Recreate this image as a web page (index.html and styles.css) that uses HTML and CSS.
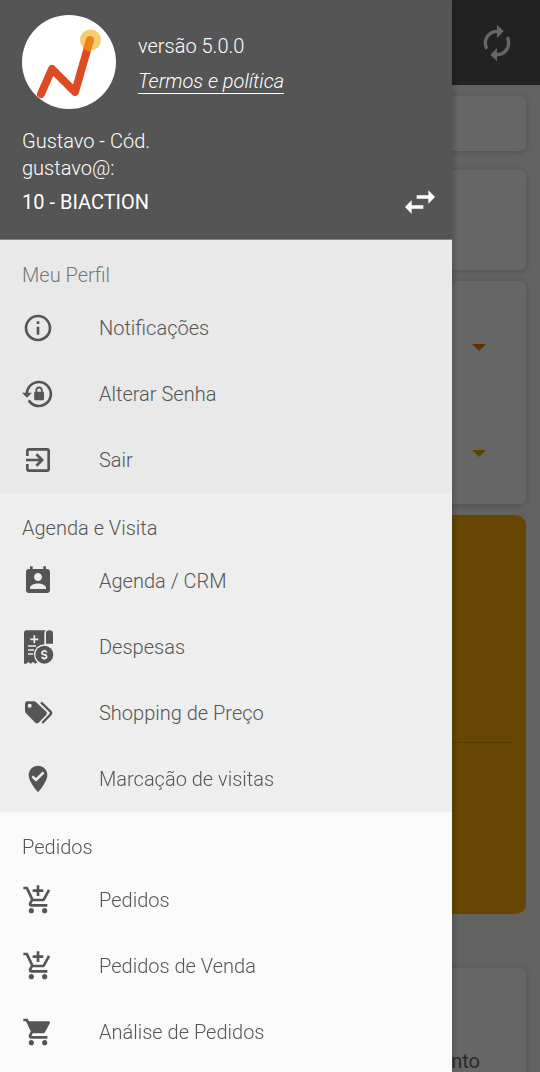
FILE: index.html
```html
<!DOCTYPE html>
<html lang="pt-BR">
<head>
<meta charset="utf-8">
<meta name="viewport" content="width=device-width, initial-scale=1">
<title>BIACTION</title>
<link rel="stylesheet" href="styles.css">
</head>
<body>
<div class="app">
  <header class="app-bar">
    <button class="icon-button" type="button" aria-label="Atualizar">
      <svg class="icon-large" viewBox="0 0 24 24"><path d="M12 6v3l4-4-4-4v3c-4.420 0-8 3.580-8 8 0 1.570.46 3.030 1.240 4.260L6.700 14.800c-.45-.83-.7-1.790-.7-2.800 0-3.310 2.690-6 6-6zm6.760 1.740L17.300 9.200c.44.84.7 1.790.7 2.800 0 3.310-2.690 6-6 6v-3l-4 4 4 4v-3c4.420 0 8-3.580 8-8 0-1.570-.46-3.030-1.240-4.260z"/></svg>
    </button>
  </header>
  <main class="board">
    <section class="card card-search"></section>
    <section class="card card-summary"></section>
    <section class="card card-filters">
      <svg class="caret caret-orange" viewBox="0 0 14 8"><path d="M0 0h14L7 7z"/></svg>
      <svg class="caret caret-yellow" viewBox="0 0 14 8"><path d="M0 0h14L7 7z"/></svg>
    </section>
    <section class="card card-gold"><hr class="gold-rule"></section>
    <section class="card card-payment">nto</section>
  </main>
</div>
<div class="scrim"></div>

<aside class="drawer">
  <header class="profile">
    <div class="brand">
      <svg class="logo" viewBox="0 0 94 94">
        <circle cx="47" cy="47" r="47" fill="#fff"/>
        <path d="M19 79L30 54 53 77 68 25" fill="none" stroke="#dd4b24" stroke-width="8" stroke-linecap="round" stroke-linejoin="round"/>
        <circle cx="68.500" cy="25" r="10.500" fill="#f4ce70"/>
        <path d="M68 25L64.800 35.500" fill="none" stroke="#ee8214" stroke-width="8"/>
        <circle cx="68" cy="25" r="4" fill="#ee8214"/>
      </svg>
      <div class="brand-text">
        <span>versão 5.0.0</span>
        <a class="terms" href="#termos">Termos e política</a>
      </div>
    </div>
    <div class="account">
      <span>Gustavo - Cód.</span>
      <span>gustavo@:</span>
      <div class="company-row">
        <strong class="company">10 - BIACTION</strong>
        <button class="icon-button" type="button" aria-label="Trocar empresa">
          <svg class="icon-large" viewBox="0 0 24 24"><path d="M6.990 11L3 15l3.990 4v-3H14v-2H6.990v-3zM21 9l-3.990-4v3H10v2h7.010v3L21 9z"/></svg>
        </button>
      </div>
    </div>
  </header>

  <nav>
    <section class="group group-profile">
      <h2 class="group-title">Meu Perfil</h2>
      <a class="item" href="#notificacoes">
        <svg class="icon" viewBox="0 0 24 24"><path d="M11 7h2v2h-2zm0 4h2v6h-2zm1-9C6.480 2 2 6.480 2 12s4.480 10 10 10 10-4.480 10-10S17.520 2 12 2zm0 18c-4.410 0-8-3.590-8-8s3.590-8 8-8 8 3.590 8 8-3.590 8-8 8z"/></svg>
        Notificações
      </a>
      <a class="item" href="#senha">
        <svg class="icon" viewBox="0 0 24 24"><path d="M12.630 2C18.160 2 22.640 6.500 22.640 12S18.160 22 12.630 22C9.120 22 6.050 20.180 4.260 17.430L5.840 16.180C7.250 18.470 9.760 20 12.640 20A8 8 0 0 0 20.640 12A8 8 0 0 0 12.640 4C8.560 4 5.200 7.060 4.710 11H7.470L3.730 14.730L0 11H2.690C3.190 5.950 7.450 2 12.630 2M15.590 10.240C16.090 10.250 16.500 10.650 16.500 11.160V15.770C16.500 16.270 16.090 16.690 15.580 16.690H10.050C9.540 16.690 9.130 16.270 9.130 15.770V11.160C9.130 10.650 9.540 10.250 10.040 10.240V9.230C10.040 7.700 11.290 6.460 12.810 6.460C14.340 6.460 15.590 7.700 15.590 9.230V10.240M12.810 7.860C12.060 7.860 11.440 8.470 11.440 9.230V10.240H14.190V9.230C14.190 8.470 13.570 7.860 12.810 7.860Z"/></svg>
        Alterar Senha
      </a>
      <a class="item" href="#sair">
        <svg class="icon" viewBox="0 0 24 24"><path d="M10.090 15.590L11.500 17l5-5-5-5-1.410 1.410L12.670 11H3v2h9.670l-2.580 2.590zM19 3H5c-1.110 0-2 .9-2 2v4h2V5h14v14H5v-4H3v4c0 1.100.89 2 2 2h14c1.100 0 2-.9 2-2V5c0-1.100-.9-2-2-2z"/></svg>
        Sair
      </a>
    </section>

    <section class="group group-agenda">
      <h2 class="group-title">Agenda e Visita</h2>
      <a class="item" href="#agenda">
        <svg class="icon" viewBox="0 0 24 24"><path d="M19 3h-1V1h-2v2H8V1H6v2H5c-1.110 0-2 .9-2 2v14c0 1.100.89 2 2 2h14c1.100 0 2-.9 2-2V5c0-1.100-.9-2-2-2zm-7 3c1.660 0 3 1.340 3 3s-1.340 3-3 3-3-1.340-3-3 1.340-3 3-3zm6 12H6v-1c0-2 4-3.100 6-3.100s6 1.100 6 3.100v1z"/></svg>
        Agenda / CRM
      </a>
      <a class="item" href="#despesas">
        <svg class="icon" viewBox="66 242 96 96">
          <path d="M80 240H137Q133 244 133 251V340L127 335 120 340 113 335 106 340 99 335 92 340 85 335 79 340H72V248Q72 240 80 240Z"/>
          <path d="M138 280V250Q138 240 148 240 159 240 159 250V280Z"/>
          <path class="cut-line" d="M103 255V279M91 267H115M84 287H108M84 299H102M84 311H100"/>
          <circle class="cut" cx="133" cy="313" r="31"/>
          <circle cx="133" cy="313" r="27"/>
          <path class="cut-line" d="M140 307Q139 302 133 302 126 302 126 307 126 312 133 313 140 314 140 319 140 324 133 324 126 324 126 319M133 298V302M133 324V328"/>
        </svg>
        Despesas
      </a>
      <a class="item" href="#shopping">
        <svg class="icon" viewBox="66 442 96 96">
          <path d="M75 462Q75 455 82 455H101Q106 455 110 459L139 486Q143 490 139 495L116 519Q111 523 106 519L78 491Q75 488 75 483Z"/>
          <circle class="cut" cx="89" cy="468" r="6"/>
          <path class="stroke" d="M123 458L151 485Q156 490 151 495L127 520"/>
        </svg>
        Shopping de Preço
      </a>
      <a class="item" href="#visitas">
        <svg class="icon" viewBox="0 0 24 24"><path d="M12 2C8.130 2 5 5.130 5 9c0 5.250 7 13 7 13s7-7.750 7-13c0-3.870-3.130-7-7-7z"/><path class="check" d="M7.800 10L10.500 12.700 16.200 7"/></svg>
        Marcação de visitas
      </a>
    </section>

    <section class="group">
      <h2 class="group-title">Pedidos</h2>
      <a class="item" href="#pedidos">
        <svg class="icon" viewBox="0 0 24 24"><path id="cart-plus" d="M11 9h2V6h3V4h-3V1h-2v3H8v2h3v3zm-4 9c-1.100 0-1.990.9-1.990 2S5.900 22 7 22s2-.9 2-2-.9-2-2-2zm10 0c-1.100 0-1.990.9-1.990 2s.89 2 1.990 2 2-.9 2-2-.9-2-2-2zm-9.830-3.250l.03-.12.9-1.630h7.450c.75 0 1.410-.41 1.750-1.030l3.860-7.010L19.420 4h-.01l-1.100 2-2.760 5H8.530l-.13-.27L6.160 6l-.95-2-.94-2H1v2h2l3.600 7.590-1.350 2.450c-.16.28-.25.61-.25.96 0 1.100.9 2 2 2h12v-2H7.420c-.13 0-.25-.11-.25-.25z"/></svg>
        Pedidos
      </a>
      <a class="item" href="#pedidos-venda">
        <svg class="icon" viewBox="0 0 24 24"><use href="#cart-plus"/></svg>
        Pedidos de Venda
      </a>
      <a class="item" href="#analise">
        <svg class="icon" viewBox="0 0 24 24"><path d="M7 18c-1.100 0-1.990.9-1.990 2S5.900 22 7 22s2-.9 2-2-.9-2-2-2zM1 2v2h2l3.600 7.590-1.350 2.450c-.16.28-.25.61-.25.96 0 1.100.9 2 2 2h12v-2H7.420c-.14 0-.25-.11-.25-.25l.03-.12.9-1.630h7.450c.75 0 1.410-.41 1.750-1.030l3.580-6.490c.08-.14.12-.31.12-.48 0-.55-.45-1-1-1H5.210l-.94-2H1zm16 16c-1.100 0-1.990.9-1.990 2s.89 2 1.990 2 2-.9 2-2-.9-2-2-2z"/></svg>
        Análise de Pedidos
      </a>
    </section>
  </nav>
</aside>
</body>
</html>
```
FILE: styles.css
```css
* {
  box-sizing: border-box;
}

body {
  margin: 0;
  font-family: Roboto, "Noto Sans", sans-serif;
  font-size: 20px;
  font-weight: 300;
  line-height: 26px;
  color: #555;
}

svg {
  display: block;
  flex: none;
  fill: currentColor;
}

.icon-button {
  padding: 0;
  border: 0;
  background: none;
  color: #fff;
}

.icon-large {
  width: 40px;
  height: 40px;
}

/* Dashboard behind the drawer */

.app {
  height: 100vh;
  overflow: hidden;
  background: #f5f5f5;
}

.app-bar {
  display: flex;
  align-items: center;
  justify-content: flex-end;
  height: 85px;
  padding: 0 23px;
  background: #555;
}

.board {
  display: flex;
  flex-direction: column;
  gap: 11px;
  padding: 11px 14px;
}

.card {
  flex: none;
  border-radius: 6px;
  background: #fff;
  box-shadow: 0 1px 6px rgba(0, 0, 0, 0.2);
}

.card-search {
  height: 55px;
  margin-bottom: 8px;
}

.card-summary {
  height: 100px;
}

.card-filters {
  display: flex;
  flex-direction: column;
  align-items: flex-end;
  gap: 98px;
  height: 223px;
  padding: 63px 40px;
}

.caret {
  width: 14px;
  height: 8px;
}

.caret-orange {
  color: #f57c00;
}

.caret-yellow {
  color: #e0aa00;
}

.card-gold {
  display: flex;
  flex-direction: column;
  justify-content: center;
  height: 399px;
  padding: 56px 14px 0;
  border-radius: 10px;
  background: #ffb000;
  box-shadow: none;
}

.gold-rule {
  width: 100%;
  height: 1px;
  margin: 0;
  border: 0;
  background: #d79400;
}

.card-payment {
  height: 240px;
  margin-top: 43px;
  padding: 80px 46px;
  text-align: right;
  font-weight: 400;
  color: #666;
}

.scrim {
  position: fixed;
  inset: 0;
  background: rgba(0, 0, 0, 0.6);
}

/* Navigation drawer */

.drawer {
  position: fixed;
  inset: 0 88px 0 0;
  overflow-y: auto;
  background: #fafafa;
  box-shadow: 0 0 8px rgba(0, 0, 0, 0.3);
}

.profile {
  display: flex;
  flex-direction: column;
  gap: 19px;
  padding: 15px 12px 17px 22px;
  border-bottom: 1px solid #8c8686;
  background: #555;
  color: #fff;
}

.brand {
  display: flex;
  align-items: center;
  gap: 22px;
}

.logo {
  width: 94px;
  height: 94px;
}

.brand-text {
  display: flex;
  flex-direction: column;
  gap: 10px;
  padding-top: 3px;
}

.terms {
  border-bottom: 1px solid #fff;
  color: inherit;
  font-style: italic;
  line-height: 24px;
  text-decoration: none;
}

.account {
  display: flex;
  flex-direction: column;
  gap: 1px;
}

.company-row {
  display: flex;
  align-items: center;
  justify-content: space-between;
}

.company {
  font-weight: 400;
}

.group-profile {
  background: #e9e9e9;
}

.group-agenda {
  background: #eee;
}

.group-title {
  margin: 0;
  padding: 22px 22px 7px;
  font-size: 20px;
  font-weight: 300;
}

.group-profile .group-title {
  color: #777;
}

.item {
  display: flex;
  align-items: center;
  gap: 45px;
  height: 66px;
  padding: 0 22px;
  color: inherit;
  text-decoration: none;
}

.icon {
  width: 32px;
  height: 32px;
  overflow: visible;
}

.cut {
  fill: #eee;
}

.cut-line {
  fill: none;
  stroke: #eee;
  stroke-width: 5;
}

.stroke {
  fill: none;
  stroke: currentColor;
  stroke-width: 7;
}

.check {
  fill: none;
  stroke: #eee;
  stroke-width: 2;
}
```
